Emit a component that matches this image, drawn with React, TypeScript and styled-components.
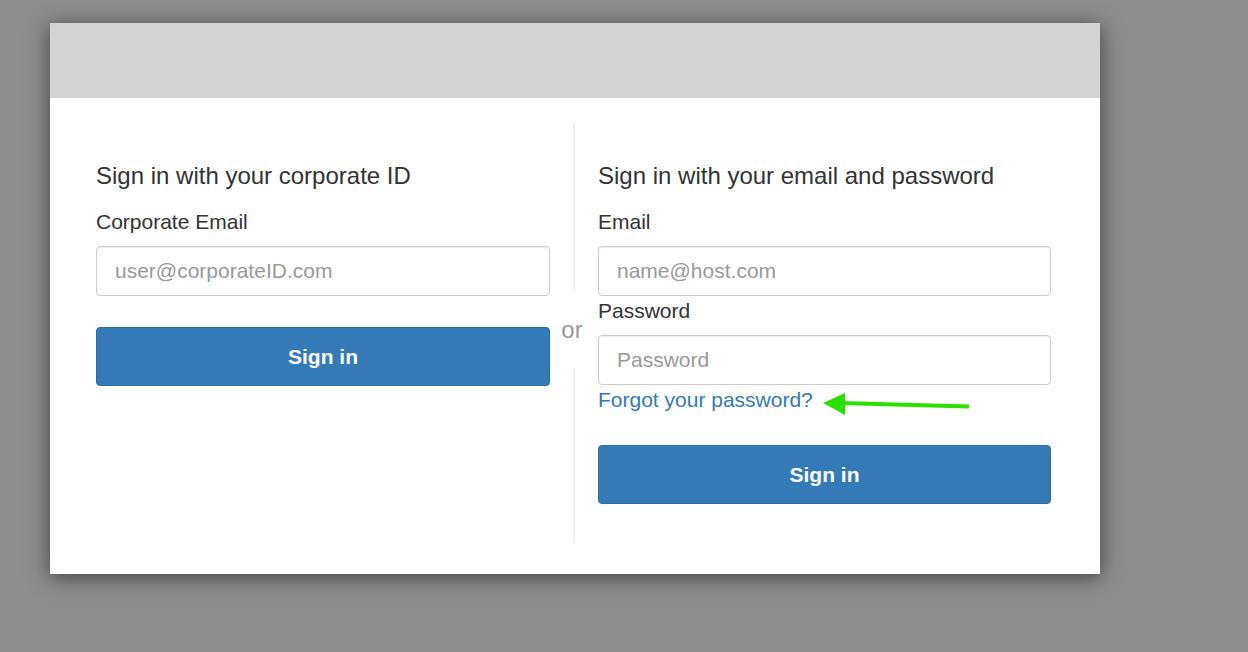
import styled, { createGlobalStyle } from "styled-components";

const GlobalStyle = createGlobalStyle`
    html, body {
        margin: 0;
        padding: 0;
        background: #8d8d8d;
        font-family: "Liberation Sans", Arial, Helvetica, sans-serif;
    }
    * {
        box-sizing: border-box;
    }
`;

const Page = styled.div`
    width: 1248px;
    height: 652px;
    padding: 23px 0 0 50px;
    background: #8d8d8d;
`;

const Modal = styled.div`
    width: 1050px;
    height: 551px;
    background: #fff;
    box-shadow: 0 3px 20px rgba(0, 0, 0, 0.55);
    display: flex;
    flex-direction: column;
`;

const Banner = styled.div`
    height: 75px;
    background: #d3d3d3;
`;

const Body = styled.div`
    flex: 1;
    display: grid;
    grid-template-columns: 454px 48px 453px;
    padding: 24px 49px 31px 46px;
`;

const Column = styled.div`
    display: flex;
    flex-direction: column;
    padding-top: 41px;
`;

const Heading = styled.h2`
    margin: 0;
    font-size: 24px;
    line-height: 26px;
    font-weight: 400;
    color: #333;
`;

const Label = styled.label<{ $gap: number }>`
    display: block;
    margin-top: ${(p) => p.$gap}px;
    font-size: 21px;
    line-height: 24px;
    color: #333;
`;

const Input = styled.input`
    display: block;
    width: 100%;
    height: 50px;
    margin-top: 12px;
    padding: 0 18px;
    border: 1px solid #ccc;
    border-radius: 4px;
    box-shadow: inset 0 1px 1px rgba(0, 0, 0, 0.075);
    font-family: inherit;
    font-size: 21px;
    color: #555;
    outline: none;
    &::placeholder {
        color: #999;
    }
`;

const Button = styled.button<{ $gap: number }>`
    display: block;
    width: 100%;
    height: 59px;
    margin-top: ${(p) => p.$gap}px;
    border: 1px solid #2e6da4;
    border-radius: 4px;
    background: #337ab7;
    color: #fff;
    font-family: inherit;
    font-size: 21px;
    font-weight: 700;
    cursor: pointer;
`;

const LinkRow = styled.div`
    display: flex;
    align-items: flex-start;
    height: 24px;
    margin-top: 3px;
`;

const Link = styled.a`
    font-size: 21px;
    line-height: 24px;
    color: #337ab7;
    text-decoration: none;
    cursor: pointer;
`;

const Arrow = styled.svg`
    display: block;
    margin: 4px 0 0 9px;
    flex-shrink: 0;
`;

const Divider = styled.div`
    display: flex;
    flex-direction: column;
    align-items: center;
`;

const Rule = styled.div<{ $height?: number }>`
    width: 2px;
    background: #f0f0f0;
    ${(p) => (p.$height ? `height: ${p.$height}px;` : "flex: 1;")}
`;

const Or = styled.div`
    height: 78px;
    display: flex;
    align-items: center;
    justify-content: center;
    padding-top: 2px;
    font-size: 24px;
    color: #999;
    margin-left: -4px;
`;

function App() {
    return (
        <>
            <GlobalStyle />
            <Page>
                <Modal>
                    <Banner />
                    <Body>
                        <Column>
                            <Heading>Sign in with your corporate ID</Heading>
                            <Label $gap={21}>Corporate Email</Label>
                            <Input placeholder="user@corporateID.com" />
                            <Button $gap={31}>Sign in</Button>
                        </Column>
                        <Divider>
                            <Rule $height={168} />
                            <Or>or</Or>
                            <Rule />
                        </Divider>
                        <Column>
                            <Heading>Sign in with your email and password</Heading>
                            <Label $gap={21}>Email</Label>
                            <Input placeholder="name@host.com" />
                            <Label $gap={3}>Password</Label>
                            <Input type="password" placeholder="Password" />
                            <LinkRow>
                                <Link>Forgot your password?</Link>
                                <Arrow width="150" height="24" viewBox="0 0 150 24">
                                    <line
                                        x1="18"
                                        y1="11"
                                        x2="147"
                                        y2="14.5"
                                        stroke="#2ae000"
                                        strokeWidth="4"
                                    />
                                    <polygon points="1,11 23,1 23,23" fill="#2ae000" />
                                </Arrow>
                            </LinkRow>
                            <Button $gap={33}>Sign in</Button>
                        </Column>
                    </Body>
                </Modal>
            </Page>
        </>
    );
}

export default App;
